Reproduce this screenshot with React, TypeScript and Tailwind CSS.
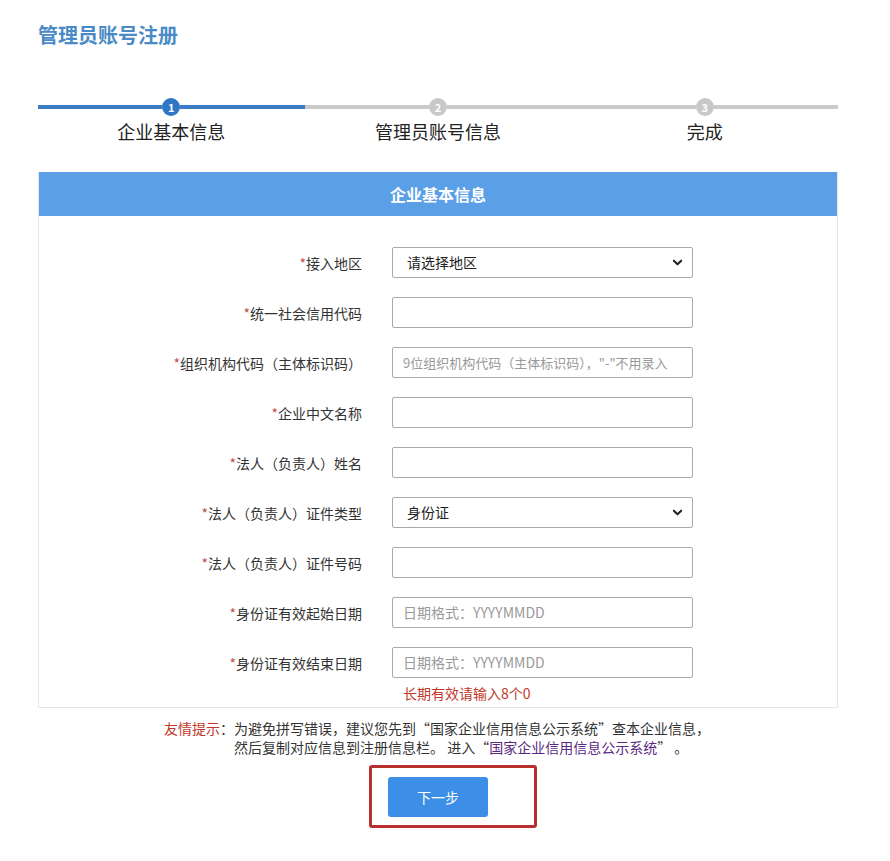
import React from 'react';

const font = { fontFamily: '"Noto Sans CJK SC", "Noto Sans", sans-serif' };

const steps = [
  { num: 1, label: '企业基本信息', active: true },
  { num: 2, label: '管理员账号信息', active: false },
  { num: 3, label: '完成', active: false },
];

type Field = {
  label: string;
  kind: 'select' | 'input';
  value?: string;
  placeholder?: string;
  small?: boolean;
};

const fields: Field[] = [
  { label: '接入地区', kind: 'select', value: '请选择地区' },
  { label: '统一社会信用代码', kind: 'input' },
  { label: '组织机构代码（主体标识码）', kind: 'input', placeholder: '9位组织机构代码（主体标识码），"-"不用录入', small: true },
  { label: '企业中文名称', kind: 'input' },
  { label: '法人（负责人）姓名', kind: 'input' },
  { label: '法人（负责人）证件类型', kind: 'select', value: '身份证' },
  { label: '法人（负责人）证件号码', kind: 'input' },
  { label: '身份证有效起始日期', kind: 'input', placeholder: '日期格式：YYYYMMDD' },
  { label: '身份证有效结束日期', kind: 'input', placeholder: '日期格式：YYYYMMDD' },
];

const Chevron = () => (
  <svg width="11" height="11" viewBox="0 0 12 12" fill="none">
    <path d="M2 4l4 4 4-4" stroke="#222" strokeWidth="2.2" strokeLinecap="round" strokeLinejoin="round" />
  </svg>
);

export default function App() {
  return (
    <div className="min-h-[861px] w-[890px] bg-white text-[#333]" style={font}>
      <div className="ml-[38px] w-[800px] pt-[21px]">
        {/* Title */}
        <h1 className="text-[20px] leading-[28px] font-bold text-[#4a8ac6]">管理员账号注册</h1>

        {/* Steps */}
        <div className="mt-[49px] grid grid-cols-3">
          {steps.map((s) => (
            <div key={s.num} className="flex flex-col items-center">
              <div className="flex w-full items-center">
                <div className={`h-[4px] flex-1 ${s.active ? 'bg-[#3b7dc4]' : 'bg-[#cacaca]'}`} />
                <div
                  className={`flex h-[18px] w-[18px] items-center justify-center rounded-full text-[11px] font-bold leading-none text-white ${
                    s.active ? 'bg-[#2f77c6]' : 'bg-[#c8c8c8]'
                  }`}
                >
                  {s.num}
                </div>
                <div className={`h-[4px] flex-1 ${s.active ? 'bg-[#3b7dc4]' : 'bg-[#cacaca]'}`} />
              </div>
              <div className="mt-[3px] text-[18px] leading-[24px] text-[#222]">{s.label}</div>
            </div>
          ))}
        </div>

        {/* Card */}
        <div className="mt-[29px] border border-[#e6e6e6] border-t-0">
          <div className="flex h-[44px] items-center justify-center bg-[#5ba0e7] text-[16px] font-bold text-white">
            企业基本信息
          </div>
          <div className="flex flex-col gap-[19px] pt-[31px]">
            {fields.map((f) => (
              <div key={f.label} className="flex items-center">
                <div className="w-[323px] text-right text-[14px] leading-[20px] text-[#333]">
                  <span className="text-[#c0504d]">*</span>
                  {f.label}
                </div>
                {f.kind === 'select' ? (
                  <div className="ml-[30px] flex h-[31px] w-[301px] items-center justify-between rounded-[2px] border border-[#a9a9a9] bg-white pl-[14px] pr-[9px] text-[14px]">
                    <span className="text-[#222]">{f.value}</span>
                    <Chevron />
                  </div>
                ) : (
                  <div
                    className={`ml-[30px] flex h-[31px] w-[301px] items-center rounded-[2px] border border-[#a9a9a9] bg-white pl-[10px] pr-[2px] ${
                      f.small ? 'text-[13px]' : 'text-[14px]'
                    }`}
                  >
                    <span className="whitespace-nowrap text-[#999]">{f.placeholder ?? ''}</span>
                  </div>
                )}
              </div>
            ))}
          </div>
          <div className="ml-[364px] pb-[6px] pt-[7px] text-[14px] leading-[16px] text-[#c0392b]">长期有效请输入8个0</div>
        </div>

        {/* Tips */}
        <div className="mt-[11px] flex text-[14px] leading-[19px] text-[#333]">
          <div className="ml-[126px] flex">
            <span className="text-[#c0392b]">友情提示</span>
            <span>：</span>
          </div>
          <div>
            <p>为避免拼写错误，建议您先到“国家企业信用信息公示系统”查本企业信息，</p>
            <p>
              然后复制对应信息到注册信息栏。 进入“<span className="text-[#5a2a82]">国家企业信用信息公示系统</span>” 。
            </p>
          </div>
        </div>

        {/* Button */}
        <div className="ml-[331px] mt-[8px] w-fit rounded-[3px] border-[3px] border-[#b7302f] pb-[8px] pl-[16px] pr-[46px] pt-[9px]">
          <button className="flex h-[40px] w-[100px] items-center justify-center rounded-[3px] bg-[#3d8ee6] text-[14px] text-white">
            下一步
          </button>
        </div>
      </div>
    </div>
  );
}
